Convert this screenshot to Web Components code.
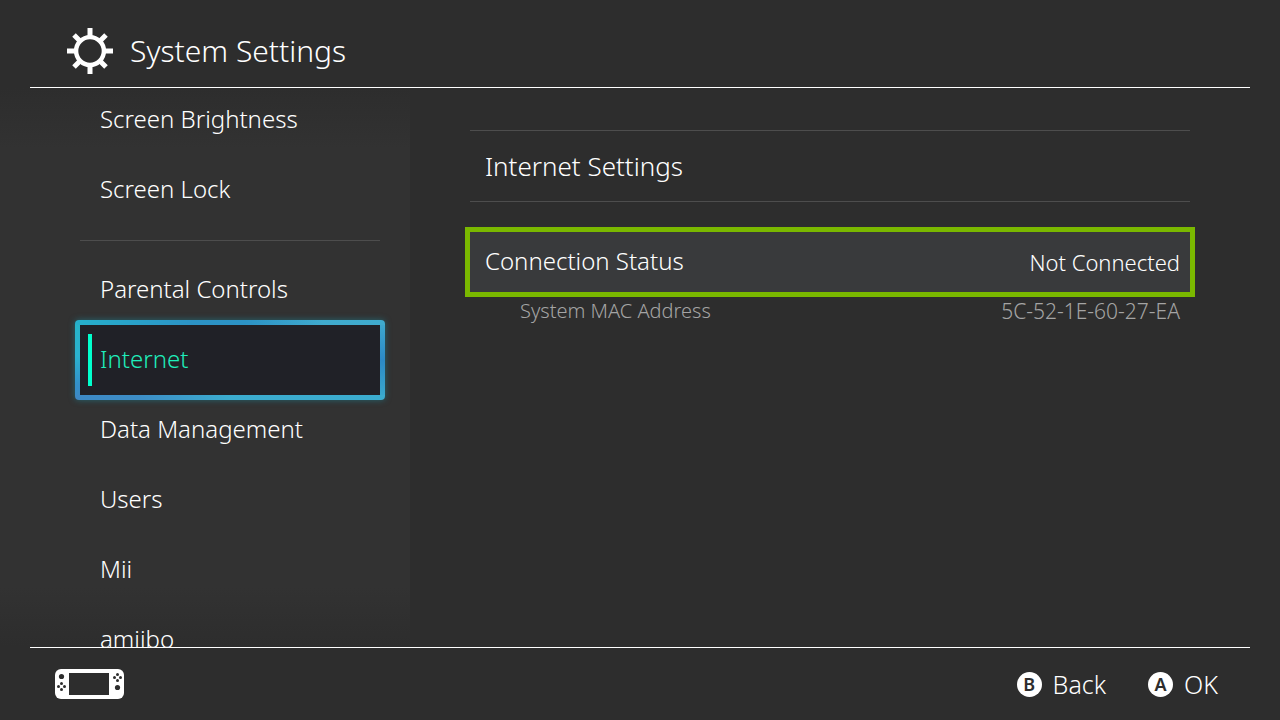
<!DOCTYPE html>
<html lang="en">
<head>
<meta charset="utf-8">
<title>System Settings</title>
<style>
  html, body { margin: 0; height: 100%; }
  body {
    background: #2d2d2d;
    color: #fff;
    font-family: "Noto Sans", "Open Sans", sans-serif;
    font-weight: 300;
  }
</style>
</head>
<body>
<settings-app>
  <settings-header slot="header">System Settings</settings-header>
  <settings-nav slot="nav">
    <nav-item>Screen Brightness</nav-item>
    <nav-item>Screen Lock</nav-item>
    <nav-divider></nav-divider>
    <nav-item>Parental Controls</nav-item>
    <nav-item selected>Internet</nav-item>
    <nav-item>Data Management</nav-item>
    <nav-item>Users</nav-item>
    <nav-item>Mii</nav-item>
    <nav-item>amiibo</nav-item>
  </settings-nav>
  <settings-panel slot="panel">
    <panel-action>Internet Settings</panel-action>
    <status-row>Connection Status<span slot="value">Not Connected</span></status-row>
    <detail-row>System MAC Address<span slot="value">5C-52-1E-60-27-EA</span></detail-row>
  </settings-panel>
  <settings-footer slot="footer">
    <console-icon slot="device"></console-icon>
    <key-hint key="B">Back</key-hint>
    <key-hint key="A">OK</key-hint>
  </settings-footer>
</settings-app>

<script>
  const define = (name, html) => {
    const template = document.createElement('template');
    template.innerHTML = html;
    customElements.define(name, class extends HTMLElement {
      constructor() {
        super();
        const root = this.attachShadow({ mode: 'open' });
        root.append(template.content.cloneNode(true));
        const key = root.querySelector('.key');
        if (key) key.textContent = this.getAttribute('key');
      }
    });
  };

  define('settings-app', `
    <style>
      :host { display: grid; grid-template: auto minmax(0, 1fr) auto / 410px minmax(0, 1fr); height: 100vh; overflow: hidden; }
      .header, .footer { grid-column: 1 / -1; margin: 0 30px; }
      .header { border-bottom: 1px solid #fff; }
      .footer { border-top: 1px solid #fff; }
      .nav { overflow: hidden; background: linear-gradient(#2d2d2d, #323232 60px, #323232 calc(100% - 60px), #2d2d2d); }
    </style>
    <header class="header"><slot name="header"></slot></header>
    <div class="nav"><slot name="nav"></slot></div>
    <main><slot name="panel"></slot></main>
    <footer class="footer"><slot name="footer"></slot></footer>`);

  define('settings-header', `
    <style>
      :host { display: flex; align-items: center; gap: 16px; height: 87px; padding: 14px 36px 0; box-sizing: border-box; }
      svg { width: 48px; height: 48px; }
      h1 { margin: 0; font-size: 30px; line-height: 40px; font-weight: inherit; }
    </style>
    <svg viewBox="0 0 48 48" fill="none" stroke="#fff" aria-hidden="true">
      <circle cx="24" cy="24" r="13.9" stroke-width="4.4"/>
      <g stroke-width="5">
        <path d="M24 1v9M24 38v9M1 24h9M38 24h9M8 8l6 6M34 34l6 6M40 8l-6 6M14 34l-6 6"/>
      </g>
    </svg>
    <h1><slot></slot></h1>`);

  define('settings-nav', `
    <style>
      :host { display: block; }
      nav { display: flex; flex-direction: column; margin: -3px 30px 0 80px; }
    </style>
    <nav aria-label="Settings"><slot></slot></nav>`);

  define('nav-divider', `
    <style>:host { display: block; height: 1px; margin: 15px 0 14px; background: #4d4d4d; }</style>`);

  define('nav-item', `
    <style>
      :host { display: block; }
      button { display: flex; align-items: center; width: 100%; height: 70px; padding: 0 20px 2px; border: 0; background: none; color: inherit; font: inherit; font-size: 24px; line-height: 32px; text-align: left; }
      :host([selected]) {
        padding: 5px; margin: -5px; border-radius: 4px;
        background:
          linear-gradient(90deg, #26b0cc, #2c93c6 38%, #2c93c6 55%, #40abce 80%, #3fabce) top / 100% 5px no-repeat,
          linear-gradient(90deg, #3d89c5, #3d8dc6 20%, #3baccf 50%, #3baccf) bottom / 100% 5px no-repeat,
          linear-gradient(#26b4c8, #2ab3d0 45%, #3391c9 80%, #3d89c5) left / 5px 100% no-repeat,
          linear-gradient(#3fabce, #2c8ac6 50%, #3baccf) right / 5px 100% no-repeat;
        box-shadow: 0 0 6px #1d8a9c99;
      }
      :host([selected]) button { position: relative; background: #202127; color: #1feebb; }
      :host([selected]) button::before { content: ""; position: absolute; left: 8px; top: 9px; bottom: 9px; width: 4px; background: #00ffcc; }
    </style>
    <button type="button"><slot></slot></button>`);

  define('settings-panel', `
    <style>:host { display: flex; flex-direction: column; padding: 42px 90px 0 60px; }</style>
    <slot></slot>`);

  define('panel-action', `
    <style>
      :host { display: block; border: solid #4d4d4d; border-width: 1px 0; margin-bottom: 30px; }
      button { display: block; width: 100%; height: 70px; padding: 0 15px; border: 0; background: none; color: inherit; font: inherit; font-size: 26px; line-height: 36px; text-align: left; }
    </style>
    <button type="button"><slot></slot></button>`);

  define('status-row', `
    <style>
      :host { display: block; }
      button { display: flex; align-items: center; justify-content: space-between; width: 100%; height: 60px; padding: 0 10px 2px 15px; border: 0; background: #393a3c; outline: 5px solid #7ab800; color: inherit; font: inherit; font-size: 24px; line-height: 32px; text-align: left; }
      .value { font-size: 22px; padding-top: 2px; }
    </style>
    <button type="button"><span><slot></slot></span><span class="value"><slot name="value"></slot></span></button>`);

  define('detail-row', `
    <style>
      :host { display: flex; align-items: center; justify-content: space-between; height: 38px; padding: 0 10px 0 50px; color: #a4a4a4; font-size: 20px; line-height: 28px; }
      .value { font-size: 21px; }
    </style>
    <span><slot></slot></span><span class="value"><slot name="value"></slot></span>`);

  define('settings-footer', `
    <style>
      :host { display: flex; align-items: center; justify-content: space-between; height: 72px; padding: 0 32px 0 25px; }
      .keys { display: flex; gap: 42px; }
    </style>
    <slot name="device"></slot><div class="keys"><slot></slot></div>`);

  define('console-icon', `
    <style>:host { display: block; } svg { display: block; width: 69px; height: 30px; }</style>
    <svg viewBox="0 0 69 30" role="img" aria-label="Handheld mode">
      <rect width="69" height="30" rx="6" fill="#fff"/>
      <g fill="#2d2d2d">
        <path d="M14 4h40v22H14z"/>
        <circle cx="6.5" cy="7.5" r="2.6"/><circle cx="62.5" cy="18.5" r="2.6"/>
        <circle cx="6.5" cy="14.5" r="1.5"/><circle cx="6.5" cy="20.5" r="1.5"/><circle cx="3.5" cy="17.5" r="1.5"/><circle cx="9.5" cy="17.5" r="1.5"/>
        <circle cx="62.5" cy="5.5" r="1.5"/><circle cx="62.5" cy="11.5" r="1.5"/><circle cx="59.5" cy="8.5" r="1.5"/><circle cx="65.5" cy="8.5" r="1.5"/>
      </g>
    </svg>`);

  define('key-hint', `
    <style>
      :host { display: block; }
      button { display: flex; align-items: center; gap: 11px; padding: 0; border: 0; background: none; color: inherit; font: inherit; font-size: 25px; line-height: 32px; }
      .key { width: 25px; height: 25px; border-radius: 50%; background: #fff; color: #2d2d2d; font: 600 18px/25px "Noto Sans", sans-serif; text-align: center; }
    </style>
    <button type="button"><span class="key"></span><slot></slot></button>`);
</script>
</body>
</html>
